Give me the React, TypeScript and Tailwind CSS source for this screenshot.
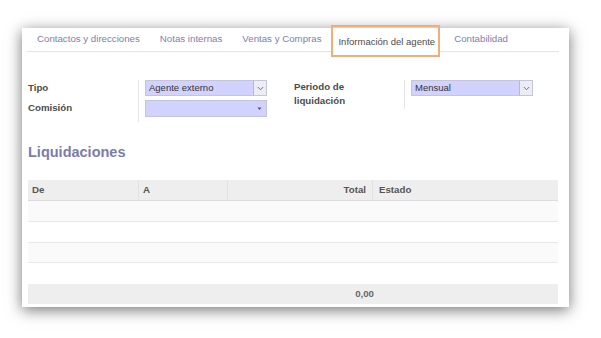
import React from "react";

const tabs = [
  "Contactos y direcciones",
  "Notas internas",
  "Ventas y Compras",
  "Información del agente",
  "Contabilidad",
];

function Chevron() {
  return (
    <div className="flex h-full w-[13px] items-center justify-center border-l border-[#b9b9c9] bg-[#ececf4]">
      <svg width="7" height="5" viewBox="0 0 7 5">
        <path d="M0.8 1 L3.5 3.8 L6.2 1" fill="none" stroke="#777" strokeWidth="1" />
      </svg>
    </div>
  );
}

function Select({ value, caret }: { value?: string; caret?: boolean }) {
  return (
    <div className="flex h-full w-full items-center border border-[#c4c4dc] bg-[#d2d2ff]">
      <span className="flex-1 pl-[3px] text-[9.5px] text-[#333]">{value}</span>
      {caret ? (
        <svg width="9" height="6" viewBox="0 0 9 6" className="mr-[2px]">
          <path d="M2.5 1.5 L6.5 1.5 L4.5 4 Z" fill="#555" />
        </svg>
      ) : (
        <Chevron />
      )}
    </div>
  );
}

export default function App() {
  return (
    <div className="h-[338px] w-[601px] bg-white pl-[22px] pt-[28px] font-['Liberation_Sans',Arial,sans-serif]">
      <div className="relative h-[279px] w-[547px] bg-white shadow-[0_3px_14px_rgba(0,0,0,0.55)]">
        {/* tabs */}
        <div className="ml-[5px] flex h-[24px] w-[532px] border-b border-[#e2e2ee]">
          {tabs.map((t, i) =>
            i === 3 ? (
              <div key={t} className="relative mr-[4px] flex items-center">
                <div className="mb-[-1px] mt-[5px] flex h-[20px] items-center border-x border-[#d8d8d8] bg-white pl-[6px] pr-[4px] text-[9.5px] text-[#4c4c4c]">
                  {t}
                </div>
                <span className="absolute -top-[3px] left-0 h-[32px] w-[109px] border-2 border-[#f3ae78]" />
              </div>
            ) : (
              <div key={t} className="flex items-center px-[10px] text-[9.7px] text-[#7f7db3]">
                {t}
              </div>
            )
          )}
        </div>

        {/* form */}
        <div className="ml-[6px] mt-[28px] flex">
          <div className="flex">
            <div className="flex w-[110px] flex-col text-[9.7px] font-bold text-[#4c4c4c]">
              <div className="flex h-[16px] items-center">Tipo</div>
              <div className="mt-[4px] flex h-[17px] items-center">Comisión</div>
            </div>
            <div className="flex flex-col border-l border-[#e6e6e6] pb-[5px] pl-[6px]">
              <div className="h-[16px] w-[122px]">
                <Select value="Agente externo" />
              </div>
              <div className="mt-[4px] h-[17px] w-[122px]">
                <Select caret />
              </div>
            </div>
          </div>
          <div className="ml-[27px] flex items-start">
            <div className="w-[110px] text-[9.7px] font-bold leading-[14px] text-[#4c4c4c]">
              Periodo de
              <br />
              liquidación
            </div>
            <div className="h-[29px] border-l border-[#e6e6e6] pl-[6px]">
              <div className="h-[16px] w-[122px]">
                <Select value="Mensual" />
              </div>
            </div>
          </div>
        </div>

        {/* heading */}
        <div className="ml-[6px] mt-[22px] text-[14.5px] font-bold leading-[17px] text-[#7c7bad]">
          Liquidaciones
        </div>

        {/* table */}
        <div className="ml-[6px] mt-[19px] w-[530px] text-[9.7px]">
          <div className="flex h-[21px] items-center border-b border-[#dcdcdc] bg-[#eeeeee] font-bold text-[#555]">
            <div className="w-[110px] pl-[4px]">De</div>
            <div className="flex h-full w-[89px] items-center border-l border-[#e2e2e2] pl-[4px]">A</div>
            <div className="flex h-full w-[145px] items-center justify-end border-l border-[#e2e2e2] pr-[6px]">
              Total
            </div>
            <div className="flex h-full flex-1 items-center border-l border-[#e2e2e2] pl-[6px]">Estado</div>
          </div>
          <div className="h-[21px] border-b border-[#e8e8e8] bg-[#fafafa]" />
          <div className="h-[21px] border-b border-[#e8e8e8] bg-white" />
          <div className="h-[20px] border-b border-[#e8e8e8] bg-[#fafafa]" />
          <div className="h-[21px] bg-white" />
          <div className="flex h-[20px] items-center bg-[#eeeeee] font-bold text-[#666]">
            <div className="w-[346px] text-right">0,00</div>
          </div>
        </div>
      </div>
    </div>
  );
}
